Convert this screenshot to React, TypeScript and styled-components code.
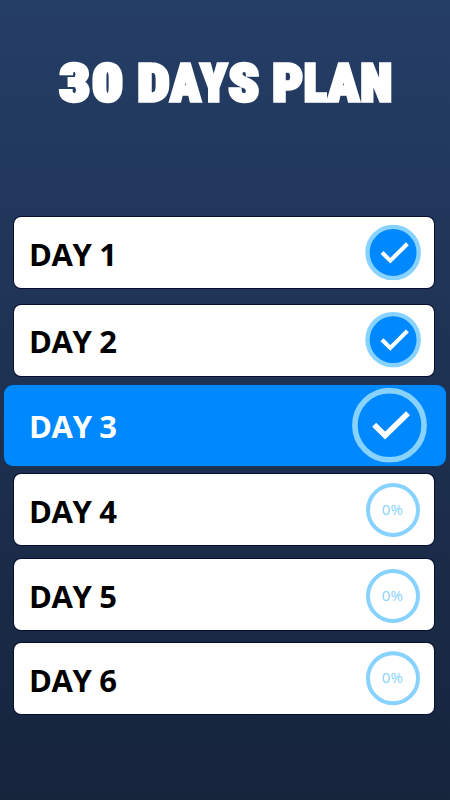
import React from "react";
import styled, { createGlobalStyle } from "styled-components";

const Global = createGlobalStyle`
  * { box-sizing: border-box; }
  body { margin: 0; background: #16243c; }
`;
const Screen = styled.main`
  width: 450px;
  height: 800px;
  overflow: hidden;
  background: linear-gradient(#253e66, #16243c);
  font-family: "Open Sans", sans-serif;
  display: flex;
  flex-direction: column;
`;
const Header = styled.h1`
  margin: 0;
  height: 217px;
  flex: none;
`;
const Lettering = styled.svg`
  display: block;
  width: 450px;
  height: 130px;
  fill: #fff;
  stroke: #fff;
  stroke-width: 3.6px;
  font-family: Roboto, sans-serif;
  font-size: 52.5px;
  font-weight: 900;
  font-stretch: 75%;
`;
const Card = styled.section<{ $active: boolean; $gap: number }>`
  flex: none;
  display: flex;
  align-items: center;
  justify-content: space-between;
  height: ${p => (p.$active ? 81 : 71)}px;
  margin: 0 ${p => (p.$active ? "4px" : "16.4px")} ${p => p.$gap}px ${p => (p.$active ? "4px" : "13.6px")};
  padding: 0 ${p => (p.$active ? "19px 0 25px" : "12.8px 0 15.4px")};
  border-radius: ${p => (p.$active ? 9 : 7)}px;
  background: ${p => (p.$active ? "#0088ff" : "#fff")};
  color: ${p => (p.$active ? "#fff" : "#000")};
  box-shadow: 0 0 0 1px ${p => (p.$active ? "#163660" : "#080e2d")};
`;
const Label = styled.span<{ $shift: number }>`
  padding-top: ${p => p.$shift}px;
  font-size: 31px;
  font-weight: 700;
  line-height: 42px;
  letter-spacing: -0.35px;
  white-space: pre;
`;
const Badge = styled.div<{ $size: number; $shift: number }>`
  display: grid;
  place-items: center;
  width: ${p => p.$size}px;
  height: ${p => p.$size}px;
  transform: translateY(${p => p.$shift}px);
  & > * { grid-area: 1 / 1; }
`;
const Ring = styled.svg`
  display: block;
  width: 100%;
  height: 100%;
  fill: none;
`;
const Percent = styled.span`
  color: #87d2ff;
  font-size: 15px;
  line-height: 20px;
  padding: 0 1px 2px 0;
`;

type State = "done" | "active" | "todo";
type Day = { n: number; state: State; gap: number; label: number; badge: number };

const days: Day[] = [
  { n: 1, state: "done", gap: 16.5, label: 3, badge: -0.5 },
  { n: 2, state: "done", gap: 9, label: 2, badge: -0.3 },
  { n: 3, state: "active", gap: 8.5, label: 2, badge: -0.3 },
  { n: 4, state: "todo", gap: 14, label: 2, badge: 0 },
  { n: 5, state: "todo", gap: 13, label: 3, badge: 1 },
  { n: 6, state: "todo", gap: 0, label: 3, badge: -0.8 },
];

const titleGlyphs = [
  { char: "3", x: 59.5, width: 30.5 },
  { char: "0", x: 92, width: 31 },
  { char: "D", x: 137.5, width: 32 },
  { char: "A", x: 170.5, width: 30 },
  { char: "Y", x: 200.5, width: 26.5 },
  { char: "S", x: 228.5, width: 30.5 },
  { char: "P", x: 272.5, width: 30.5 },
  { char: "L", x: 304, width: 22.5 },
  { char: "A", x: 328, width: 31 },
  { char: "N", x: 360.5, width: 31.5 },
];

function Status({ state, shift }: { state: State; shift: number }) {
  if (state === "active") {
    return (
      <Badge $size={75} $shift={shift}>
        <Ring viewBox="0 0 75 75">
          <circle cx="37.5" cy="37.5" r="34.6" stroke="#87d2ff" strokeWidth="5.6" />
          <path d="M22.2 37 33.1 47.8 56 25.5" stroke="#fff" strokeWidth="5.6" />
        </Ring>
      </Badge>
    );
  }
  if (state === "done") {
    return (
      <Badge $size={56} $shift={shift}>
        <Ring viewBox="0 0 56 56">
          <circle cx="28.1" cy="28" r="25.6" fill="#0088ff" stroke="#87d2ff" strokeWidth="4.4" />
          <path d="M17 28 25.3 36.2 42.4 19.2" stroke="#fff" strokeWidth="4.1" />
        </Ring>
      </Badge>
    );
  }
  return (
    <Badge $size={56} $shift={shift}>
      <Ring viewBox="0 0 56 56">
        <circle cx="28" cy="28" r="25" stroke="#87d2ff" strokeWidth="4" />
      </Ring>
      <Percent>0%</Percent>
    </Badge>
  );
}

export default function App() {
  return (
    <Screen>
      <Global />
      <Header aria-label="30 DAYS PLAN">
        <Lettering>
          {titleGlyphs.map(g => (
            <text key={g.x} x={g.x} y="100.8" textLength={g.width} lengthAdjust="spacingAndGlyphs">{g.char}</text>
          ))}
        </Lettering>
      </Header>
      {days.map(d => (
        <Card key={d.n} $active={d.state === "active"} $gap={d.gap}>
          <Label $shift={d.label}>{`DAY ${d.n}`}</Label>
          <Status state={d.state} shift={d.badge} />
        </Card>
      ))}
    </Screen>
  );
}
